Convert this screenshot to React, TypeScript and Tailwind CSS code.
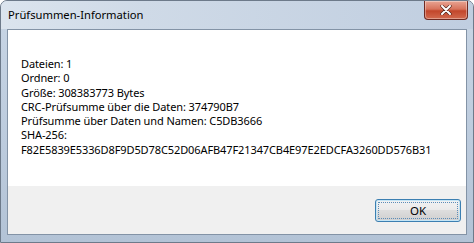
export default function App() {
  const lines = [
    "Dateien: 1",
    "Ordner: 0",
    "Größe: 308383773 Bytes",
    "CRC-Prüfsumme über die Daten: 374790B7",
    "Prüfsumme über Daten und Namen: C5DB3666",
    "SHA-256:",
    "F82E5839E5336D8F9D5D78C52D06AFB47F21347CB4E97E2EDCFA3260DD576B31",
  ];

  return (
    <div
      className="flex h-[243px] w-[474px] flex-col overflow-hidden rounded-t-[7px] border border-[#6d7a8a] bg-[linear-gradient(180deg,#c9d6e5_0%,#bccbdd_60%,#b3c3d6_100%)] text-[11px] text-black"
      style={{ fontFamily: '"Noto Sans", "Open Sans", sans-serif' }}
    >
      {/* title bar */}
      <div className="flex h-[28px] shrink-0 items-start justify-between bg-[linear-gradient(90deg,#dbe4ee_0%,#cfdae7_30%,#c0cee0_100%)]">
        <span className="pl-[7px] pt-[6px] text-[11.2px] leading-[15px] text-black">
          Prüfsummen-Information
        </span>
        <button className="mr-[5px] flex h-[19px] w-[44px] items-center justify-center rounded-b-[4px] border border-t-0 border-[#6e2a22] bg-[linear-gradient(180deg,#e8a493_0%,#d7735c_45%,#c2462b_55%,#d26a4f_100%)] shadow-[inset_0_0_0_1px_rgba(255,255,255,0.35)]">
          <svg width="12" height="10" viewBox="0 0 12 10">
            <path
              d="M2 1 L10 9 M10 1 L2 9"
              stroke="#4a2018"
              strokeWidth="3.2"
              strokeLinecap="round"
            />
            <path
              d="M2 1 L10 9 M10 1 L2 9"
              stroke="#ffffff"
              strokeWidth="2"
              strokeLinecap="round"
            />
          </svg>
        </button>
      </div>

      {/* client area */}
      <div className="mx-[6px] flex flex-1 flex-col border border-[#8393a6] bg-white">
        <div className="flex-1 px-[13px] pt-[27px]">
          {lines.map((line, i) => (
            <div
              key={i}
              className="whitespace-nowrap leading-[14.3px] tracking-[-0.1px] text-black"
            >
              {line}
            </div>
          ))}
        </div>
        <div className="flex h-[48px] items-start justify-end bg-[#f0f0f0] pr-[5px] pt-[13px]">
          <button className="h-[23px] w-[86px] rounded-[3px] border border-[#3c7fb1] bg-[linear-gradient(180deg,#f2f2f2_0%,#ebebeb_45%,#dddddd_50%,#cfcfcf_100%)] p-[2px] shadow-[inset_0_0_0_1px_#c4e5f6]">
            <div className="flex h-full w-full items-center justify-center border border-dotted border-[#5c8db8] text-[11.5px] leading-none text-black">
              OK
            </div>
          </button>
        </div>
      </div>
      <div className="h-[7px] shrink-0" />
    </div>
  );
}
